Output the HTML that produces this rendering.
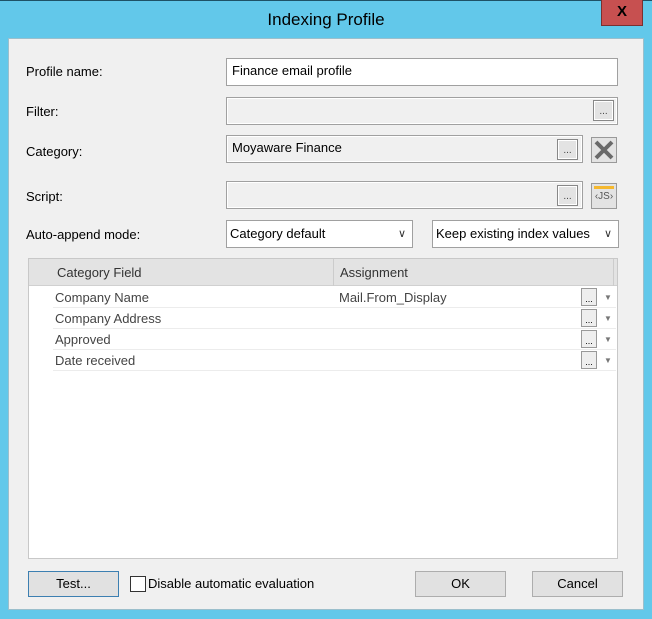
<!DOCTYPE html>
<html><head><meta charset="utf-8"><style>
*{box-sizing:border-box;margin:0;padding:0}
body{width:652px;height:619px;background:#62c8ea;position:relative;overflow:hidden;font-family:"Liberation Sans",Arial,sans-serif;font-size:13px;color:#000}
.abs{position:absolute}
.top{left:0;top:0;width:652px;height:1px;background:#1e5266}
.title{left:0;top:10px;width:652px;text-align:center;font-size:17px;color:#000}
.close{left:601px;top:0;width:42px;height:26px;background:#c75050;border:1px solid #7a3030;border-top:none;color:#000;font-weight:bold;font-size:15px;text-align:center;line-height:24px}
.client{left:8px;top:38px;width:636px;height:572px;background:#f0f0f0;border:1px solid #9bbfcc}
.lbl{font-size:13px}
.inp{border:1px solid #a0a0a0;background:#f0f0f0;height:28px;padding:4px 5px;font-size:13px;box-shadow:inset 0 0 0 1px #fff}
.inp.white{background:#fff}
.dots{width:21px;height:21px;border:1px solid #888;background:#e3e3e3;box-shadow:inset 0 0 0 1px #fff;font-size:10px;text-align:center;line-height:22px;color:#444}
.combo{border:1px solid #a0a0a0;background:#fff;height:28px;padding:5px 3px;font-size:13px}
.combo .arr{position:absolute;right:6px;top:6px;font-size:11px;color:#333}
.grid{left:28px;top:258px;width:590px;height:301px;background:#fff;border:1px solid #c8c8c8}
.hdr{left:0;top:0;width:588px;height:27px;background:#e3e3e3;border-bottom:1px solid #d0d0d0}
.row{left:24px;width:563px;height:21px;border-bottom:1px solid #ececec;color:#444;font-size:13px}
.btn{height:26px;border:1px solid #adadad;background:#e1e1e1;text-align:center;line-height:24px;font-size:13px}
.sdots{width:16px;height:18px;border:1px solid #999;background:#eee;font-size:9px;text-align:center;line-height:20px}
.sarr{font-size:8px;color:#777}
</style></head><body>
<div class="abs top"></div>
<div class="abs title">Indexing Profile</div>
<div class="abs close">X</div>
<div class="abs client"></div>

<div class="abs lbl" style="left:26px;top:64px">Profile name:</div>
<div class="abs inp white" style="left:226px;top:58px;width:392px">Finance email profile</div>

<div class="abs lbl" style="left:26px;top:104px">Filter:</div>
<div class="abs inp" style="left:226px;top:97px;width:392px"></div>
<div class="abs dots" style="left:593px;top:100px">...</div>

<div class="abs lbl" style="left:26px;top:144px">Category:</div>
<div class="abs inp" style="left:226px;top:135px;width:357px">Moyaware Finance</div>
<div class="abs dots" style="left:557px;top:139px">...</div>
<div class="abs" style="left:591px;top:137px;width:26px;height:26px;border:1px solid #999;background:#e3e3e3">
<svg width="24" height="24" viewBox="0 0 24 24"><path d="M4 4L20 20M20 4L4 20" stroke="#6a6a6a" stroke-width="4"/></svg></div>

<div class="abs lbl" style="left:26px;top:189px">Script:</div>
<div class="abs inp" style="left:226px;top:181px;width:357px"></div>
<div class="abs dots" style="left:557px;top:185px">...</div>
<div class="abs" style="left:591px;top:183px;width:26px;height:26px;border:1px solid #999;background:#e3e3e3;font-size:10px;text-align:center;line-height:26px;color:#555">
<div style="position:absolute;left:2px;top:2px;width:20px;height:3px;background:#f5b82e"></div>‹JS›</div>

<div class="abs lbl" style="left:26px;top:227px">Auto-append mode:</div>
<div class="abs combo" style="left:226px;top:220px;width:187px">Category default<span class="arr">&#8744;</span></div>
<div class="abs combo" style="left:432px;top:220px;width:187px">Keep existing index values<span class="arr">&#8744;</span></div>

<div class="abs grid">
 <div class="abs hdr">
  <div class="abs" style="left:28px;top:6px;color:#333">Category Field</div>
  <div class="abs" style="left:304px;top:0;width:1px;height:27px;background:#ccc"></div>
  <div class="abs" style="left:311px;top:6px;color:#333">Assignment</div>
  <div class="abs" style="left:584px;top:0;width:1px;height:27px;background:#ccc"></div>
 </div>
 <div class="abs row" style="top:28px"><span class="abs" style="left:2px;top:3px">Company Name</span><span class="abs" style="left:286px;top:3px">Mail.From_Display</span></div>
 <div class="abs row" style="top:49px"><span class="abs" style="left:2px;top:3px">Company Address</span></div>
 <div class="abs row" style="top:70px"><span class="abs" style="left:2px;top:3px">Approved</span></div>
 <div class="abs row" style="top:91px"><span class="abs" style="left:2px;top:3px">Date received</span></div>
 <div class="abs sdots" style="left:552px;top:29px">...</div><div class="abs sarr" style="left:575px;top:34px">▼</div>
 <div class="abs sdots" style="left:552px;top:50px">...</div><div class="abs sarr" style="left:575px;top:55px">▼</div>
 <div class="abs sdots" style="left:552px;top:71px">...</div><div class="abs sarr" style="left:575px;top:76px">▼</div>
 <div class="abs sdots" style="left:552px;top:92px">...</div><div class="abs sarr" style="left:575px;top:97px">▼</div>
</div>

<div class="abs btn" style="left:28px;top:571px;width:91px;border-color:#3c7fb1">Test...</div>
<div class="abs" style="left:130px;top:576px;width:16px;height:16px;border:1px solid #333;background:#fff"></div>
<div class="abs" style="left:148px;top:576px">Disable automatic evaluation</div>
<div class="abs btn" style="left:415px;top:571px;width:91px">OK</div>
<div class="abs btn" style="left:532px;top:571px;width:91px">Cancel</div>
</body></html>
